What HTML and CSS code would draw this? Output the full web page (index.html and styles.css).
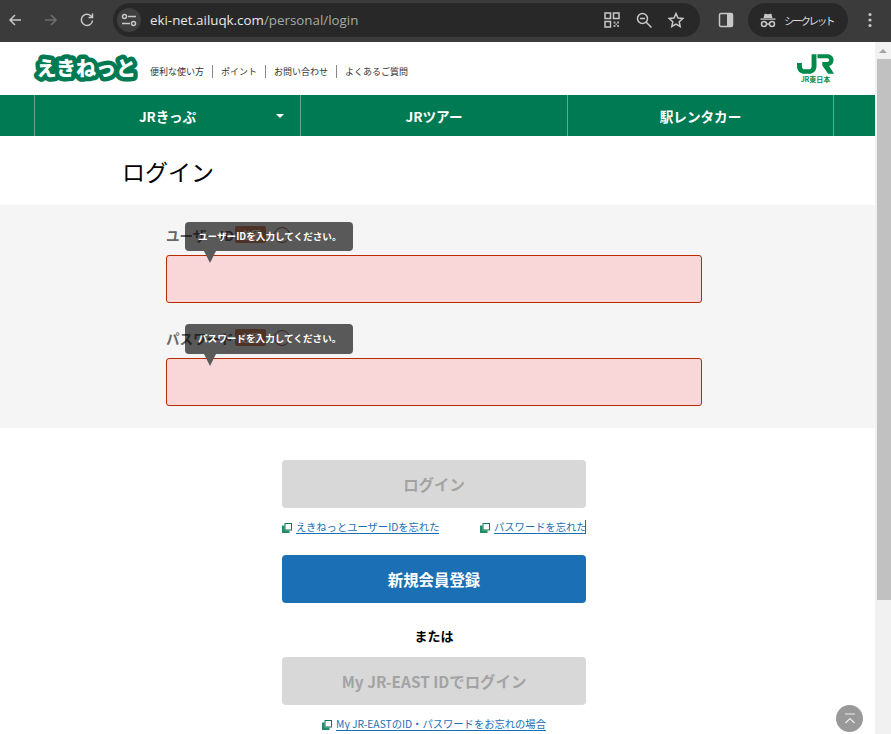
FILE: index.html
```html
<!DOCTYPE html>
<html lang="ja">
<head>
<meta charset="utf-8">
<title>ログイン</title>
<link rel="stylesheet" href="styles.css">
</head>
<body>
<div class="toolbar">
  <svg class="tb-icon" viewBox="0 0 16 16"><path d="M14 8H3M8 3 3 8l5 5" class="st-light"/></svg>
  <svg class="tb-icon fwd" viewBox="0 0 16 16"><path d="M2 8h11M8 3l5 5-5 5" class="st-dim"/></svg>
  <svg class="tb-icon reload" viewBox="0 0 16 16"><path d="M13.5 8.5A5.6 5.6 0 1 1 11.8 3.8L13.500 5.500M13.500 1.500v4h-4" class="st-light"/></svg>
  <div class="omnibox">
    <span class="site-chip">
      <svg viewBox="0 0 16 16" class="chip-icon"><path d="M7 4.500h8M1 11.500h8" class="st-light"/><circle cx="3.500" cy="4.500" r="2" class="st-light"/><circle cx="12.500" cy="11.500" r="2" class="st-light"/></svg>
    </span>
    <span class="url"><span class="url-host">eki-net.ailuqk.com</span>/personal/login</span>
    <span class="omni-actions">
      <svg class="omni-icon" viewBox="0 0 16 16"><path d="M1 1h5.500v5.500H1zM9.500 1H15v5.500H9.500zM1 9.500h5.500V15H1z" class="st-light"/><path d="M9.500 9.500h2v2h-2zM13 9.500h2v2h-2zM9.500 13h2v2h-2zM13 13h2v2h-2zM11.500 11.500h1.500v1.500h-1.500z" class="fill-dim"/></svg>
      <svg class="omni-icon" viewBox="0 0 16 16"><circle cx="6.500" cy="6.500" r="5" class="st-light"/><path d="M10 10l5.500 5.500M4 6.500h5" class="st-light"/></svg>
      <svg class="omni-icon" viewBox="0 0 16 16"><path d="M8 1.500l2 4.500 4.800.5-3.600 3.200 1 4.800L8 12.100 3.800 14.500l1-4.800L1.200 6.500 6 6z" class="st-light"/></svg>
    </span>
  </div>
  <svg class="tb-icon panel" viewBox="0 0 16 16"><rect x="1.500" y="1.500" width="13" height="13" rx="1.500" class="st-light"/><rect x="9" y="1.500" width="5.500" height="13" class="fill-light"/></svg>
  <div class="incognito">
    <svg class="incog-icon" viewBox="0 0 18 18"><path d="M1.500 7.500h15v1.300h-15zM4.500 7l1.200-4.500c1 .5 2 .8 3.300.8s2.300-.3 3.300-.8L13.500 7z" class="fill-light"/><circle cx="5" cy="13" r="2.500" class="st-light"/><circle cx="13" cy="13" r="2.500" class="st-light"/><path d="M7.500 13h3" class="st-light"/></svg>
    <span class="incog-label">シークレット</span>
  </div>
  <svg class="tb-icon kebab" viewBox="0 0 16 16"><circle cx="8" cy="2.500" r="1.600" class="fill-light"/><circle cx="8" cy="8" r="1.600" class="fill-light"/><circle cx="8" cy="13.500" r="1.600" class="fill-light"/></svg>
</div>

<div class="viewport">
  <main class="page">
    <header class="site-header">
      <div class="brand-row">
        <svg class="logo" viewBox="0 0 104 31"><text x="2.500" y="23" class="logo-text">えきねっと</text></svg>
        <ul class="util-nav">
          <li>便利な使い方</li>
          <li>ポイント</li>
          <li>お問い合わせ</li>
          <li>よくあるご質問</li>
        </ul>
      </div>
      <div class="jr-logo">
        <svg viewBox="0 0 38 21" class="jr-mark"><path d="M15 0h5v12c0 5-3 8-8 8H8c-5 0-8-3-8-8V9h5v3c0 2.500 1 3.500 3 3.500h4c2 0 3-1 3-3.500z" class="fill-green"/><path d="M21 0h10c4 0 6.500 2.500 6.500 6s-2 5.500-4.500 6l5 8h-6l-6-8.500V8h5c1.500 0 2-1 2-2s-.5-2-2-2H21z" class="fill-green"/></svg>
        <span class="jr-text">JR東日本</span>
      </div>
    </header>
    <nav class="main-nav">
      <a class="nav-item has-caret">JRきっぷ<span class="caret"></span></a>
      <a class="nav-item">JRツアー</a>
      <a class="nav-item">駅レンタカー</a>
    </nav>
    <h1 class="title">ログイン</h1>
    <section class="form-band">
      <div class="field">
        <div class="label-row"><span>ユーザーID</span><span class="req">必須</span><span class="help">?</span></div>
        <div class="text-input"></div>
        <div class="tip">ユーザーIDを入力してください。</div>
      </div>
      <div class="field">
        <div class="label-row"><span>パスワード</span><span class="req">必須</span><span class="help">?</span></div>
        <div class="text-input"></div>
        <div class="tip tip-second">パスワードを入力してください。</div>
      </div>
    </section>
    <section class="actions">
      <div class="btn btn-off">ログイン</div>
      <div class="link-row">
        <a class="ext-link"><svg class="ext" viewBox="0 0 10 10"><use href="#ext"/></svg><span class="lnk">えきねっとユーザーIDを忘れた</span></a>
        <a class="ext-link"><svg class="ext" viewBox="0 0 10 10"><use href="#ext"/></svg><span class="lnk caret-end">パスワードを忘れた</span></a>
      </div>
      <div class="btn btn-blue">新規会員登録</div>
      <p class="or">または</p>
      <div class="btn btn-off">My JR-EAST IDでログイン</div>
      <a class="ext-link center"><svg class="ext" viewBox="0 0 10 10"><use href="#ext"/></svg><span class="lnk">My JR-EASTのID・パスワードをお忘れの場合</span></a>
    </section>
    <div class="to-top"><svg viewBox="0 0 14 12" class="to-top-icon"><path d="M2 1h10M2.500 10 7 5.500l4.500 4.500"/></svg></div>
  </main>
  <aside class="scrollbar">
    <div class="sb-up"><span class="sb-arrow"></span></div>
    <div class="sb-thumb"></div>
  </aside>
</div>
<svg class="defs" width="0" height="0"><defs><g id="ext"><path d="M0 2.500h2.500v5h5V10H0z" fill="#1f8a63"/><rect x="3" y="0.500" width="6.500" height="6.500" fill="#fff" stroke="#007a53"/></g></defs></svg>
</body>
</html>
```
FILE: styles.css
```css
* { box-sizing: border-box; }
html, body { margin: 0; height: 734px; overflow: hidden; }
body { font-family: "Noto Sans CJK JP", "Noto Sans", sans-serif; background: #fff; color: #000; }

.st-light, .st-dim { fill: none; stroke-width: 1.500; }
.st-light { stroke: #c7c7c7; }
.st-dim { stroke: #6f6f6f; }
.fill-light { fill: #c7c7c7; }
.fill-dim { fill: #a8a8a8; }
.fill-green { fill: #008a4a; }
.defs { position: absolute; }

.toolbar { height: 42px; background: #3b3b3b; display: flex; align-items: center; padding: 0 0 2px 7px; }
.tb-icon { width: 16px; height: 16px; flex: none; }
.fwd { margin-left: 20px; }
.reload { margin-left: 20px; }
.omnibox { margin-left: 18px; width: 587px; height: 34px; border-radius: 17px; background: #282828; display: flex; align-items: center; padding: 0 16px 0 4px; flex: none; }
.site-chip { width: 24px; height: 24px; border-radius: 50%; background: #3f3f3f; display: flex; align-items: center; justify-content: center; flex: none; }
.chip-icon { width: 16px; height: 16px; }
.url { margin-left: 9px; font-family: "Open Sans", sans-serif; font-size: 13.350px; color: #a9a9a9; white-space: nowrap; }
.url-host { color: #e8e8e8; }
.omni-actions { margin-left: auto; display: flex; gap: 16px; align-items: center; }
.omni-icon { width: 16px; height: 16px; }
.panel { margin-left: 18px; }
.incognito { margin-left: 14px; width: 100px; height: 34px; border-radius: 17px; background: #282828; display: flex; align-items: center; padding-left: 11px; gap: 7px; flex: none; white-space: nowrap; }
.incog-label { color: #dcdcdc; font-size: 10.500px; font-weight: 400; letter-spacing: -2.300px; }
.incog-icon { width: 18px; height: 18px; flex: none; }
.kebab { margin-left: 14px; }

.viewport { height: 692px; display: flex; }
.page { width: 875px; flex: none; position: relative; height: 692px; overflow: hidden; }
.scrollbar { width: 16px; background: #f1f1f1; padding-left: 2px; flex: none; }
.sb-up { height: 17px; display: flex; align-items: center; justify-content: center; padding-right: 2px; }
.sb-arrow { width: 0; height: 0; border-left: 4px solid transparent; border-right: 4px solid transparent; border-bottom: 4px solid #a3a3a3; }
.sb-thumb { width: 14px; height: 541px; background: #c1c1c1; }

.site-header { height: 53px; display: flex; justify-content: space-between; padding: 11px 41px 0 34px; }
.brand-row { display: flex; align-items: flex-start; }
.logo { width: 104px; height: 31px; flex: none; overflow: visible; }
.logo-text { font-family: "Noto Sans CJK JP", sans-serif; font-size: 20px; font-weight: 900; fill: #fff; stroke: #007a53; stroke-width: 9px; stroke-linejoin: round; paint-order: stroke fill; }
.util-nav { list-style: none; margin: 12px 0 0 12px; padding: 0; display: flex; font-size: 9px; line-height: 13px; color: #333; }
.util-nav li { padding: 0 8px; border-left: 1px solid #888; }
.util-nav li:first-child { padding-left: 0; border-left: 0; }
.jr-logo { width: 37px; display: flex; flex-direction: column; align-items: center; margin-top: 1px; }
.jr-mark { width: 37px; height: 21px; flex: none; }
.jr-text { font-size: 7px; font-weight: 700; line-height: 8px; color: #008a4a; white-space: nowrap; }

.main-nav { height: 41px; background: #007a53; display: grid; grid-template-columns: 266px 267px 267px; padding-left: 34px; width: 875px; }
.nav-item { border-left: 1px solid #5fa98f; color: #fff; font-size: 13.600px; font-weight: 700; display: flex; align-items: center; justify-content: center; position: relative; }
.nav-item:last-child { border-right: 1px solid #5fa98f; }
.caret { position: absolute; right: 16px; top: 19px; width: 0; height: 0; border-left: 4px solid transparent; border-right: 4px solid transparent; border-top: 4px solid #fff; }

.title { margin: 0; height: 69px; padding: 19px 0 0 122px; font-size: 23px; font-weight: 400; line-height: 32px; }

.form-band { height: 223px; background: #f5f5f5; padding: 21px 173px 0 166px; }
.field { position: relative; margin-bottom: 26px; }
.label-row { display: flex; align-items: center; height: 17px; margin-bottom: 12px; font-size: 13.500px; font-weight: 700; color: #666; gap: 1.500px; }
.req { width: 31px; height: 17px; background: #d88a68; border-radius: 2px; color: #fff; font-size: 10px; text-align: center; line-height: 17px; }
.help { width: 16px; height: 16px; border: 1px solid #a86050; border-radius: 50%; font-size: 9px; line-height: 14px; text-align: center; color: #f5f5f5; margin-left: 6px; }
.text-input { height: 48px; background: #f9d6d8; border: 1px solid #b82a00; border-radius: 3px; }
.tip { position: absolute; left: 19px; top: -4px; width: 168px; height: 29px; background: rgba(0,0,0,.64); border-radius: 4px; color: #fff; font-size: 9.600px; font-weight: 700; line-height: 29px; padding-left: 13px; white-space: nowrap; }
.tip::after { content: ""; position: absolute; left: 19px; top: 29px; border-left: 6px solid transparent; border-right: 6px solid transparent; border-top: 12px solid #5a5a5a; }
.tip-second { top: -5px; height: 30px; }
.tip-second::after { top: 30px; }

.actions { width: 304px; margin-left: 282px; padding-top: 32px; }
.btn { height: 48px; border-radius: 4px; display: flex; align-items: center; justify-content: center; font-size: 15.400px; font-weight: 700; }
.btn-off { background: #d8d8d8; color: #a3a3a3; }
.btn-blue { background: #1b6fb4; color: #fff; }
.link-row { display: flex; justify-content: space-between; height: 47px; padding-top: 10px; }
.ext-link { display: flex; align-items: center; font-size: 10.300px; line-height: 17px; height: 17px; color: #1b6fb4; white-space: nowrap; }
.ext { width: 10px; height: 10px; margin-right: 4px; flex: none; margin-top: 3px; }
.lnk { border-bottom: 1px solid #1b6fb4; line-height: 13px; }
.caret-end { border-right: 1px solid #1b6fb4; width: 92px; }
.or { margin: 0; height: 54px; padding-top: 23px; text-align: center; font-size: 13px; font-weight: 700; line-height: 19px; }
.center { justify-content: center; margin-top: 10px; }

.to-top { position: absolute; left: 836px; top: 663px; width: 27px; height: 27px; border-radius: 50%; background: #999; display: flex; align-items: center; justify-content: center; }
.to-top-icon { width: 14px; height: 12px; fill: none; stroke: #eee; stroke-width: 1.200; }
```
